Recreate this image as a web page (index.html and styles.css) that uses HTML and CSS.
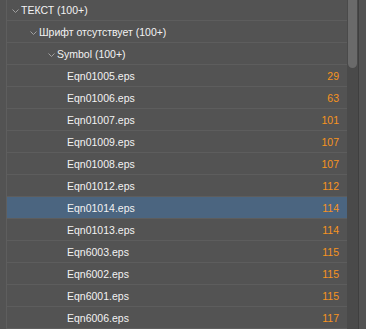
FILE: index.html
```html
<!DOCTYPE html>
<html lang="ru">
<head>
    <meta charset="UTF-8">
    <meta name="viewport" content="width=device-width, initial-scale=1.0">
    <title>Отчёт</title>
    <link rel="stylesheet" href="styles.css">
</head>
<body>
    <div class="panel">
        <div class="gutter"></div>
        <ul class="tree">
            <li class="row level1">
                <svg class="chev" width="7" height="4" viewBox="0 0 7 4"><polyline points="0.5,0.5 3.5,3.5 6.5,0.5"/></svg>
                <span class="name">ТЕКСТ (100+)</span>
            </li>
            <li class="row level2">
                <svg class="chev" width="7" height="4" viewBox="0 0 7 4"><polyline points="0.5,0.5 3.5,3.5 6.5,0.5"/></svg>
                <span class="name">Шрифт отсутствует (100+)</span>
            </li>
            <li class="row level3">
                <svg class="chev" width="7" height="4" viewBox="0 0 7 4"><polyline points="0.5,0.5 3.5,3.5 6.5,0.5"/></svg>
                <span class="name">Symbol (100+)</span>
            </li>
            <li class="row file"><span class="name">Eqn01005.eps</span><span class="page">29</span></li>
            <li class="row file"><span class="name">Eqn01006.eps</span><span class="page">63</span></li>
            <li class="row file"><span class="name">Eqn01007.eps</span><span class="page">101</span></li>
            <li class="row file"><span class="name">Eqn01009.eps</span><span class="page">107</span></li>
            <li class="row file"><span class="name">Eqn01008.eps</span><span class="page">107</span></li>
            <li class="row file"><span class="name">Eqn01012.eps</span><span class="page">112</span></li>
            <li class="row file selected"><span class="name">Eqn01014.eps</span><span class="page">114</span></li>
            <li class="row file"><span class="name">Eqn01013.eps</span><span class="page">114</span></li>
            <li class="row file"><span class="name">Eqn6003.eps</span><span class="page">115</span></li>
            <li class="row file"><span class="name">Eqn6002.eps</span><span class="page">115</span></li>
            <li class="row file"><span class="name">Eqn6001.eps</span><span class="page">115</span></li>
            <li class="row file"><span class="name">Eqn6006.eps</span><span class="page">117</span></li>
        </ul>
        <div class="scrollbar"><div class="thumb"></div></div>
        <div class="edge"></div>
    </div>
</body>
</html>
```

FILE: styles.css
```css
body {
    margin: 0;
    padding: 0;
    background-color: #535353;
    font-family: "Liberation Sans", Arial, sans-serif;
    font-size: 10.5px;
    color: #f2f2f2;
    overflow: hidden;
}
.panel {
    display: flex;
    height: 329px;
    overflow: hidden;
}
.gutter {
    width: 6px;
    border-right: 1px solid #5e5e5e;
}
.tree {
    flex: 1;
    list-style: none;
    margin: -1px 0 0 0;
    padding: 0;
}
.row {
    display: flex;
    align-items: center;
    box-sizing: border-box;
    height: 22px;
    padding-top: 1px;
    border-bottom: 1px solid #5d5d5d;
    padding-right: 8px;
}
.row.selected {
    background-color: #4b6580;
}
.chev {
    margin-right: 2px;
    margin-top: 2px;
}
.chev polyline {
    fill: none;
    stroke: #a0a0a0;
    stroke-width: 1;
}
.level1 {
    padding-left: 5px;
}
.level2 {
    padding-left: 23px;
}
.level3 {
    padding-left: 41px;
}
.file {
    padding-left: 60px;
}
.name {
    flex: 1;
}
.page {
    color: #f7931e;
}
.scrollbar {
    width: 11px;
    background-color: #4a4a4a;
}
.thumb {
    margin: 0 1px 0 1px;
    height: 68px;
    background-color: #6a6a6a;
    border-radius: 0 0 5px 5px;
}
.edge {
    width: 7px;
    border-left: 1px solid #3f3f3f;
}
```
